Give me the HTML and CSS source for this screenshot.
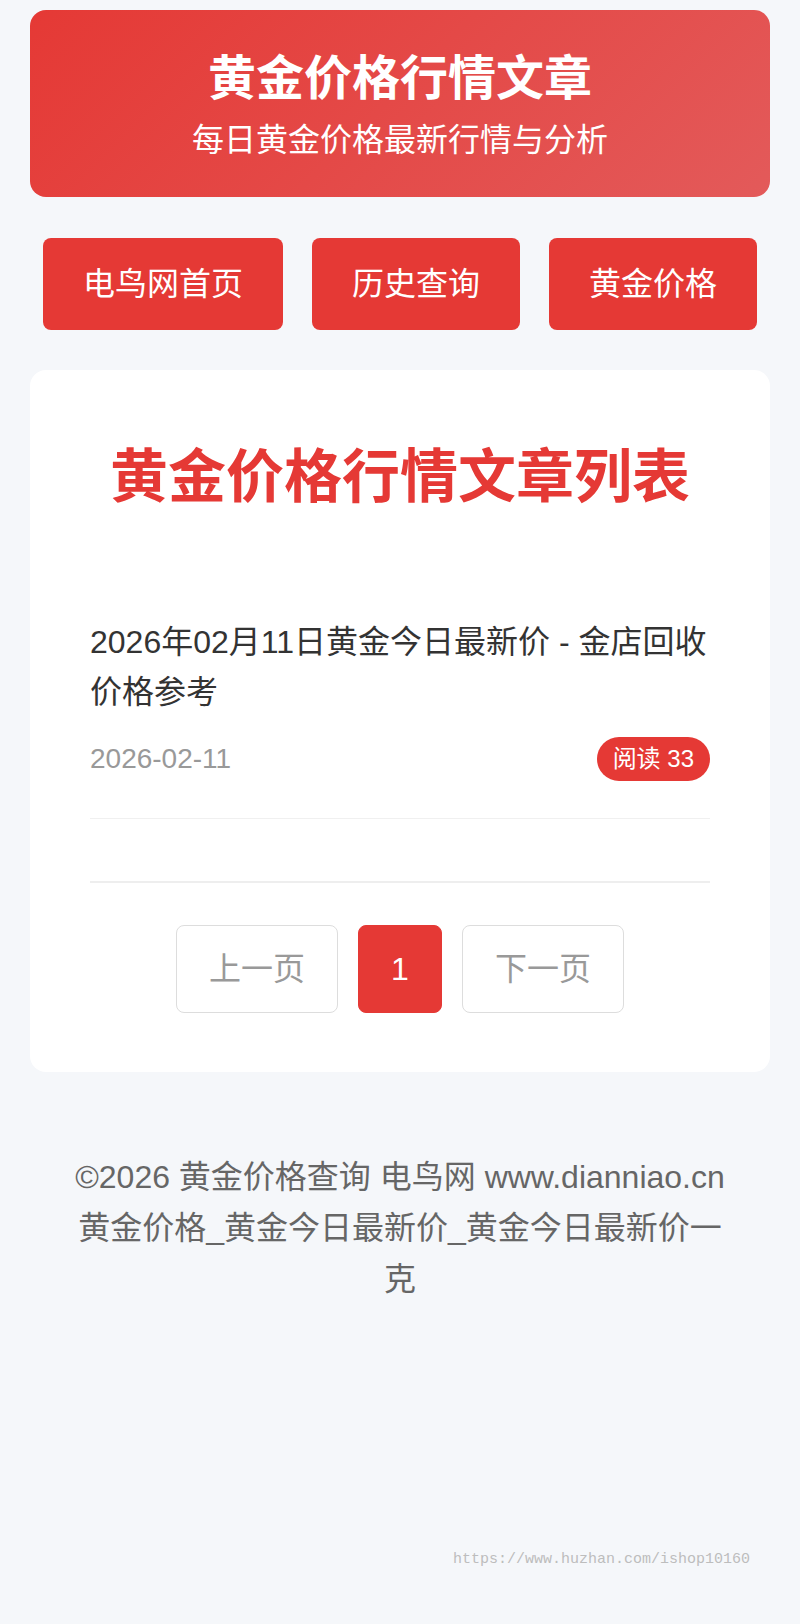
FILE: index.html
```html
<!DOCTYPE html>
<html lang="zh-CN">
<head>
<meta charset="utf-8">
<title>黄金价格行情文章</title>
<link rel="stylesheet" href="styles.css">
</head>
<body>
<div class="page">
  <header class="hero">
    <h1 class="hero-title">黄金价格行情文章</h1>
    <p class="hero-sub">每日黄金价格最新行情与分析</p>
  </header>

  <nav class="nav">
    <a class="nav-btn" href="#">电鸟网首页</a>
    <a class="nav-btn" href="#">历史查询</a>
    <a class="nav-btn" href="#">黄金价格</a>
  </nav>

  <main class="card">
    <h2 class="card-title">黄金价格行情文章列表</h2>
    <ul class="list">
      <li class="item">
        <a class="item-title" href="#">2026年02月11日黄金今日最新价 - 金店回收价格参考</a>
        <div class="item-meta">
          <span class="item-date">2026-02-11</span>
          <span class="badge">阅读 33</span>
        </div>
      </li>
    </ul>
    <div class="pager">
      <a class="pg" href="#">上一页</a>
      <span class="pg pg-active">1</span>
      <a class="pg" href="#">下一页</a>
    </div>
  </main>

  <footer class="footer">©2026 黄金价格查询 电鸟网 www.dianniao.cn 黄金价格_黄金今日最新价_黄金今日最新价一克</footer>
</div>
<div class="watermark">https://www.huzhan.com/ishop10160</div>
</body>
</html>
```

FILE: styles.css
```css
* { box-sizing: border-box; }
html, body {
  margin: 0;
  padding: 0;
}
body {
  background: #f5f7fa;
  font-family: "Liberation Sans", Arial, "Noto Sans CJK SC", sans-serif;
  color: #333;
  min-height: 1624px;
  position: relative;
}
.page {
  width: 740px;
  margin: 0 auto;
  padding-top: 10px;
}
.hero {
  background: linear-gradient(135deg, #e53935 0%, #e35a5a 100%);
  border-radius: 16px;
  padding: 40px 30px 35px;
  text-align: center;
  color: #fff;
}
.hero-title {
  margin: 0 0 10px;
  font-size: 48px;
  line-height: 58px;
  font-weight: bold;
}
.hero-sub {
  margin: 0;
  font-size: 32px;
  line-height: 44px;
}
.nav {
  display: flex;
  justify-content: center;
  gap: 29px;
  margin: 41px 0 40px;
}
.nav-btn {
  display: block;
  background: #e53935;
  color: #fff;
  text-decoration: none;
  font-size: 32px;
  line-height: 44px;
  padding: 24px 40px;
  border-radius: 8px;
}
.card {
  background: #fff;
  border-radius: 16px;
  padding: 70px 60px 59px;
}
.card-title {
  margin: 0 0 67px;
  text-align: center;
  color: #e53935;
  font-size: 58px;
  line-height: 73px;
  font-weight: bold;
}
.list {
  list-style: none;
  margin: 0;
  padding: 0;
}
.item {
  padding: 37px 0 37px;
  border-bottom: 1px solid #f0f0f0;
}
.item-title {
  display: block;
  color: #333;
  text-decoration: none;
  font-size: 32px;
  line-height: 50px;
  margin-bottom: 20px;
}
.item-meta {
  display: flex;
  justify-content: space-between;
  align-items: center;
}
.item-date {
  color: #999;
  font-size: 28px;
  line-height: 44px;
}
.badge {
  background: #e53935;
  color: #fff;
  font-size: 24px;
  line-height: 36px;
  padding: 4px 16px;
  border-radius: 22px;
}
.pager {
  margin-top: 62px;
  border-top: 2px solid #eeeeee;
  padding-top: 42px;
  display: flex;
  justify-content: center;
  gap: 20px;
}
.pg {
  display: block;
  font-size: 32px;
  line-height: 46px;
  padding: 20px 32px;
  border: 1px solid #dddddd;
  border-radius: 8px;
  color: #999;
  text-decoration: none;
  background: #fff;
}
.pg-active {
  background: #e53935;
  border-color: #e53935;
  color: #fff;
}
.footer {
  width: 660px;
  margin: 0 auto;
  padding-top: 80px;
  text-align: center;
  color: #666;
  font-size: 32px;
  line-height: 51px;
}
.watermark {
  position: absolute;
  right: 50px;
  top: 1550px;
  font-family: "Liberation Mono", monospace;
  font-size: 15px;
  line-height: 20px;
  color: #bdbdbd;
}
```
